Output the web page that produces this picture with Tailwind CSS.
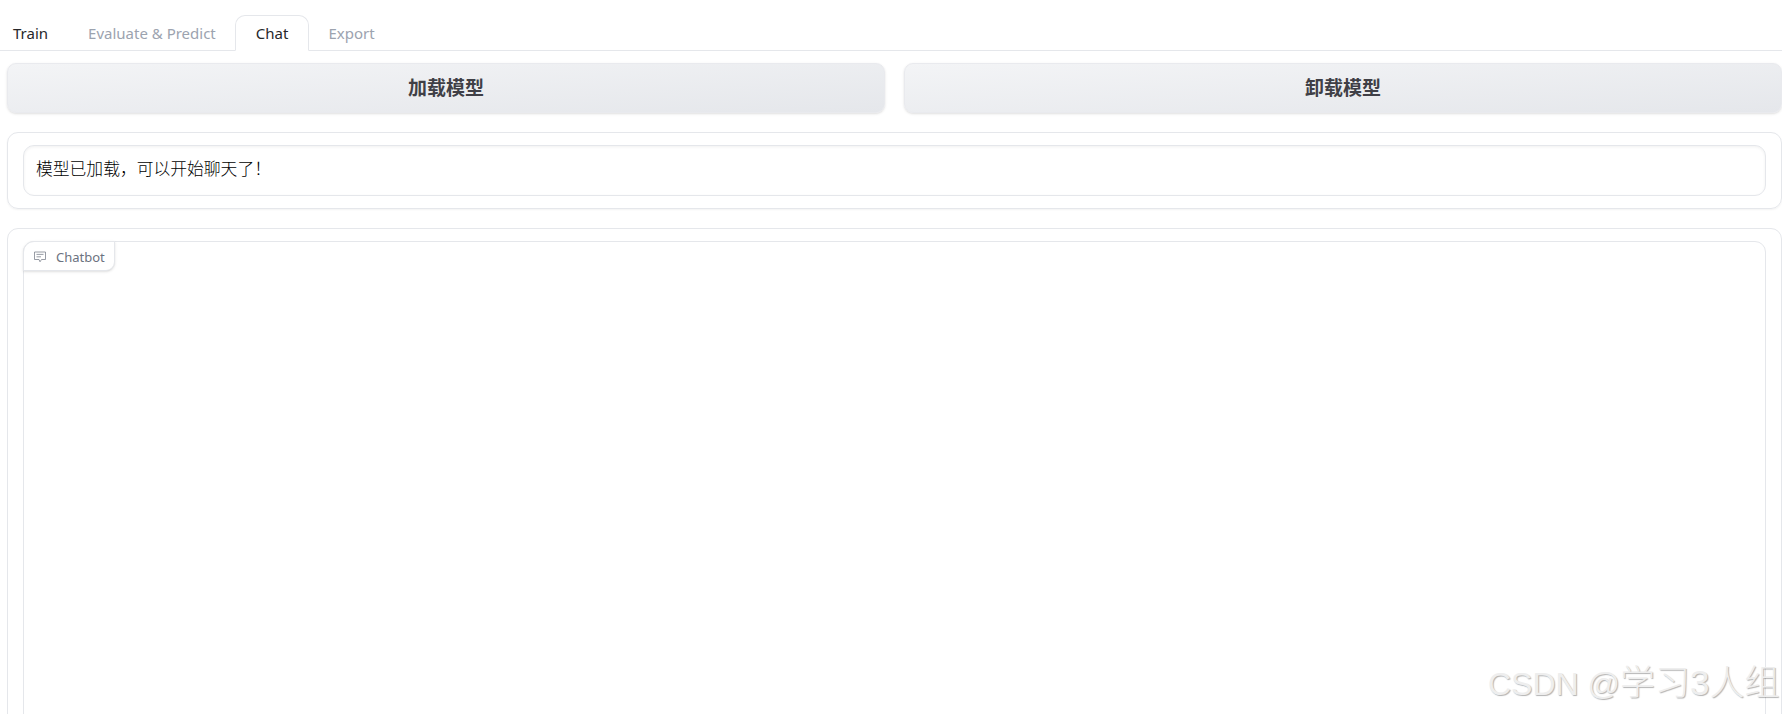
<!DOCTYPE html>
<html lang="en">
<head>
    <meta charset="UTF-8">
    <title>Chat</title>
    <script src="https://cdn.jsdelivr.net/npm/@tailwindcss/browser@4"></script>
</head>
<body class="bg-white h-[714px] overflow-hidden relative font-['Noto_Sans','Noto_Sans_CJK_SC',sans-serif]">
    <!-- tabs -->
    <div class="h-[51px] pt-[15px] flex items-stretch border-b border-[#e5e7eb] text-[15px]">
        <button class="pl-[13px] pr-5 pt-[2px] text-[#27272a]">Train</button>
        <button class="pl-5 pr-[19px] pt-[2px] text-[#9ca3af]">Evaluate &amp; Predict</button>
        <button class="px-5 text-[#27272a] bg-white border border-[#e5e7eb] border-b-white rounded-t-[10px] h-9">Chat</button>
        <button class="pl-[19px] pr-5 pt-[2px] text-[#9ca3af]">Export</button>
    </div>

    <div class="pl-[7px] pt-3 flex flex-col gap-[19px]">
        <!-- load / unload -->
        <div class="flex gap-[19px]">
            <button class="flex-1 h-[50px] pt-px rounded-[9px] border border-[#e9eaee] shadow-sm bg-gradient-to-br from-[#f3f4f6] to-[#e5e7eb] text-[19px] font-bold text-[#3f3f46]">加载模型</button>
            <button class="flex-1 h-[50px] pt-px rounded-[9px] border border-[#e9eaee] shadow-sm bg-gradient-to-br from-[#f3f4f6] to-[#e5e7eb] text-[19px] font-bold text-[#3f3f46]">卸载模型</button>
        </div>

        <!-- status -->
        <div class="h-[77px] rounded-[11px] border border-[#e5e7eb] shadow-xs px-[15px] pt-3">
            <div class="h-[51px] rounded-[11px] border border-[#e5e7eb] shadow-[inset_0_1px_3px_rgba(0,0,0,0.06)] px-3 pb-[3px] flex items-center text-[16.800px] font-light text-black">模型已加载，可以开始聊天了！</div>
        </div>

        <!-- chatbot -->
        <div class="h-[500px] rounded-[11px] border border-[#e5e7eb] px-[15px] pt-3">
            <div class="h-[500px] rounded-[11px] border border-[#e5e7eb]">
                <div class="w-[92px] h-[30px] -mt-px -ml-px rounded-tl-[11px] rounded-br-[9px] border border-[#e5e7eb] shadow-sm flex items-center pl-[10px] gap-[10px] pt-[3px] text-[13px] text-[#6b7280] bg-white">
                    <svg class="w-3 h-3 -mt-[2px] text-[#7d838e]" viewBox="0 0 12 12" fill="none" stroke="currentColor" stroke-width="0.8">
                        <path d="M0.500 1h11v7.500H7.500L6 10.800 5 8.500H0.500z"/>
                        <path d="M2.500 3.400h7M2.500 5.800h4.500"/>
                    </svg>
                    <span>Chatbot</span>
                </div>
            </div>
        </div>
    </div>

    <!-- watermark -->
    <div class="absolute left-[1488px] top-[663px] text-[35px] leading-[40px] whitespace-nowrap text-[#eeeeee] font-['Liberation_Sans','Noto_Sans_CJK_SC',sans-serif] font-light [text-shadow:1px_1px_1px_rgba(0,0,0,0.3)]"><span class="text-[32px]">CSDN @</span>学习3人组</div>
</body>
</html>
